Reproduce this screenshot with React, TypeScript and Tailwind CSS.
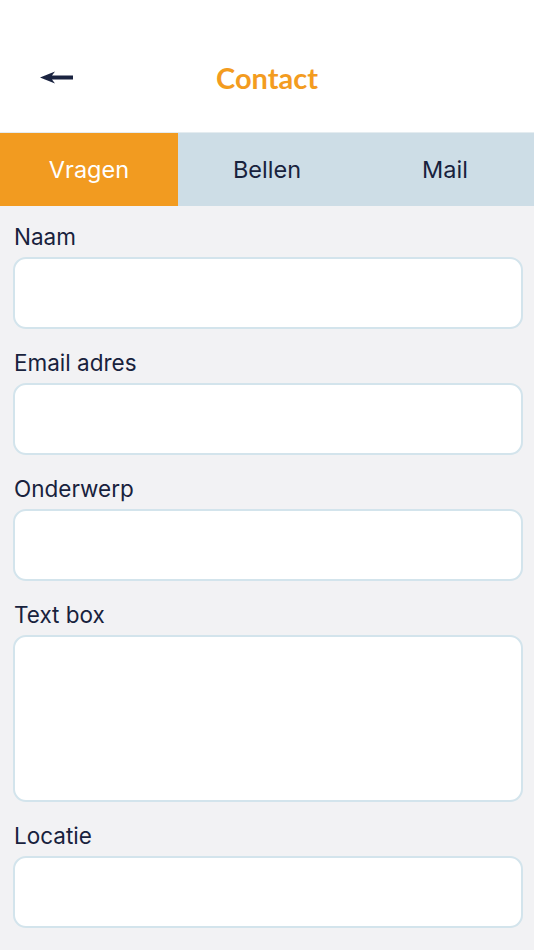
import React from "react";

function Field({ label, tall }: { label: string; tall?: boolean }) {
  return (
    <div className="flex flex-col">
      <label className="text-[22.5px] leading-[28px] text-[#18223d] pl-[14px] pb-[6px]">{label}</label>
      <div
        className={`ml-[13px] mr-[11px] bg-white border-2 border-[#d3e4ec] rounded-[13px] ${tall ? "h-[167px]" : "h-[72px]"}`}
      />
    </div>
  );
}

export default function App() {
  return (
    <div className="w-[534px] h-[950px] bg-[#f2f2f4] flex flex-col overflow-hidden" style={{ fontFamily: "Inter, 'Noto Sans', sans-serif" }}>
      <header className="h-[132px] shrink-0 bg-white relative flex items-center justify-center">
        <button className="absolute left-[40px] top-[69px]">
          <svg width="34" height="17" viewBox="0 0 34 17">
            <path d="M0 8.5 L15 2.5 L12 6.6 L33 6.6 L33 10.4 L12 10.4 L15 14.5 Z" fill="#1a2340" />
          </svg>
        </button>
        <h1 className="text-[29px] font-bold text-[#f39c1f] mt-[24px]" style={{ fontFamily: "Lato, sans-serif" }}>Contact</h1>
      </header>
      <nav className="h-[74px] shrink-0 grid grid-cols-3 bg-[#cddde6] border-t border-[#e4ecf0]">
        <div className="bg-[#f29b20] flex items-center justify-center text-white text-[23.5px]">Vragen</div>
        <div className="flex items-center justify-center text-[#18223d] text-[23.5px]">Bellen</div>
        <div className="flex items-center justify-center text-[#18223d] text-[23.5px]">Mail</div>
      </nav>
      <main className="flex flex-col gap-[20px] pt-[17px]">
        <Field label="Naam" />
        <Field label="Email adres" />
        <Field label="Onderwerp" />
        <Field label="Text box" tall />
        <Field label="Locatie" />
      </main>
    </div>
  );
}
